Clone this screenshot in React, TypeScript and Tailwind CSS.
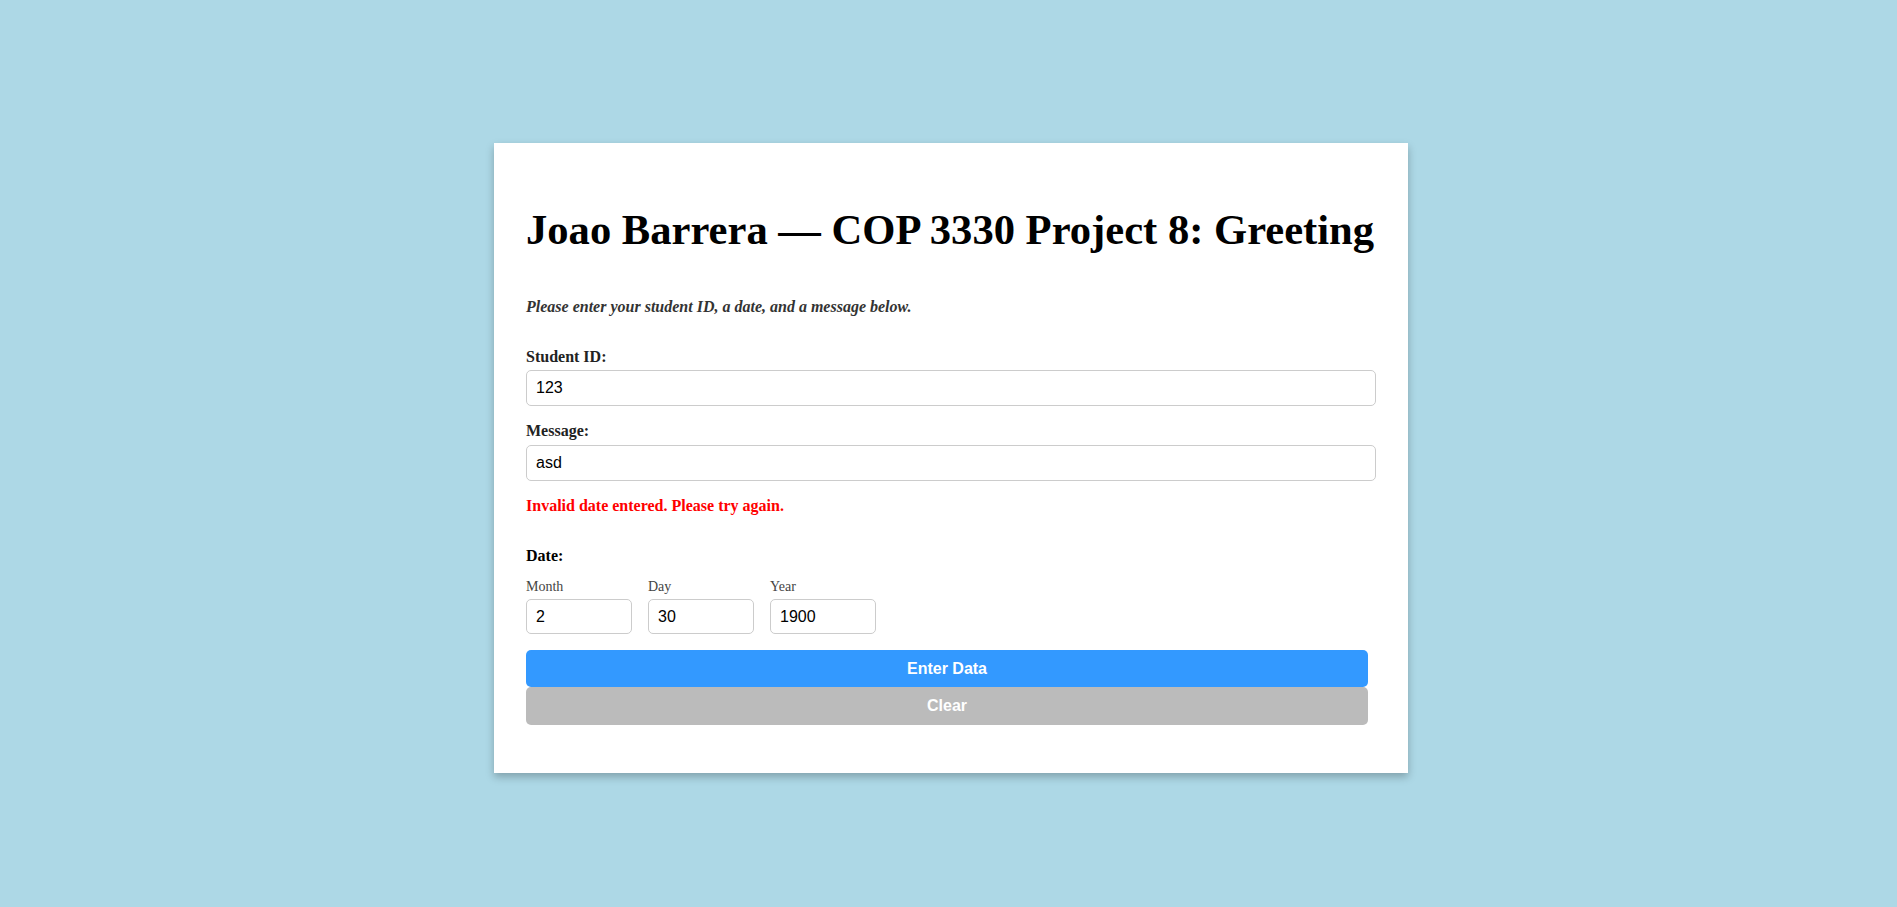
import React, { useState } from "react";

const serif = "font-['Liberation_Serif','Times_New_Roman',serif]";
const sans = "font-['Liberation_Sans',Arial,sans-serif]";

const DateField = ({ label, value }: { label: string; value: string }) => (
  <div className="flex flex-col">
    <label className={`${serif} text-[14px] leading-[18px] text-[#444]`}>{label}</label>
    <input
      defaultValue={value}
      className={`${sans} mt-[3px] w-[106px] h-[35px] px-[9px] text-[16px] text-black border border-[#ccc] rounded-[5px] outline-none`}
    />
  </div>
);

const App: React.FC = () => {
  const [studentId] = useState("123");
  const [message] = useState("asd");

  return (
    <div className="min-h-screen w-full bg-[#add8e6] flex pl-[494px] pt-[143px]">
      <div className="w-[914px] h-[630px] bg-white px-8 pt-8 shadow-[0_4px_8px_rgba(0,0,0,0.25)]">
        <h1 className={`${serif} mt-[31px] text-[42.6px] leading-[48px] font-bold text-black whitespace-nowrap`}>
          Joao Barrera — COP 3330 Project 8: Greeting
        </h1>

        <p className={`${serif} mt-[43px] text-[16px] leading-[20px] italic font-bold text-[#333]`}>
          Please enter your student ID, a date, and a message below.
        </p>

        <div className="mt-[30px] flex flex-col">
          <label className={`${serif} text-[16px] leading-[20px] font-bold text-[#222]`}>Student ID:</label>
          <input
            defaultValue={studentId}
            className={`${sans} mt-[3px] w-full h-[36px] px-[9px] text-[16px] text-black border border-[#ccc] rounded-[5px] outline-none`}
          />
        </div>

        <div className="mt-[15px] flex flex-col">
          <label className={`${serif} text-[16px] leading-[20px] font-bold text-[#222]`}>Message:</label>
          <input
            defaultValue={message}
            className={`${sans} mt-[4px] w-full h-[36px] px-[9px] text-[16px] text-black border border-[#ccc] rounded-[5px] outline-none`}
          />
        </div>

        <p className={`${serif} mt-[15px] text-[16px] leading-[20px] font-bold text-[#ff0000]`}>
          Invalid date entered. Please try again.
        </p>

        <div className={`${serif} mt-[30px] text-[16px] leading-[20px] font-bold text-black`}>Date:</div>

        <div className="mt-[12px] flex gap-4">
          <DateField label="Month" value="2" />
          <DateField label="Day" value="30" />
          <DateField label="Year" value="1900" />
        </div>

        <div className="mt-4 w-[842px] flex flex-col">
          <button className={`${sans} h-[37px] bg-[#3399ff] text-white text-[16px] font-bold rounded-[5px]`}>
            Enter Data
          </button>
          <button className={`${sans} h-[38px] bg-[#bbbbbb] text-white text-[16px] font-bold rounded-[5px]`}>
            Clear
          </button>
        </div>
      </div>
    </div>
  );
};

export default App;
